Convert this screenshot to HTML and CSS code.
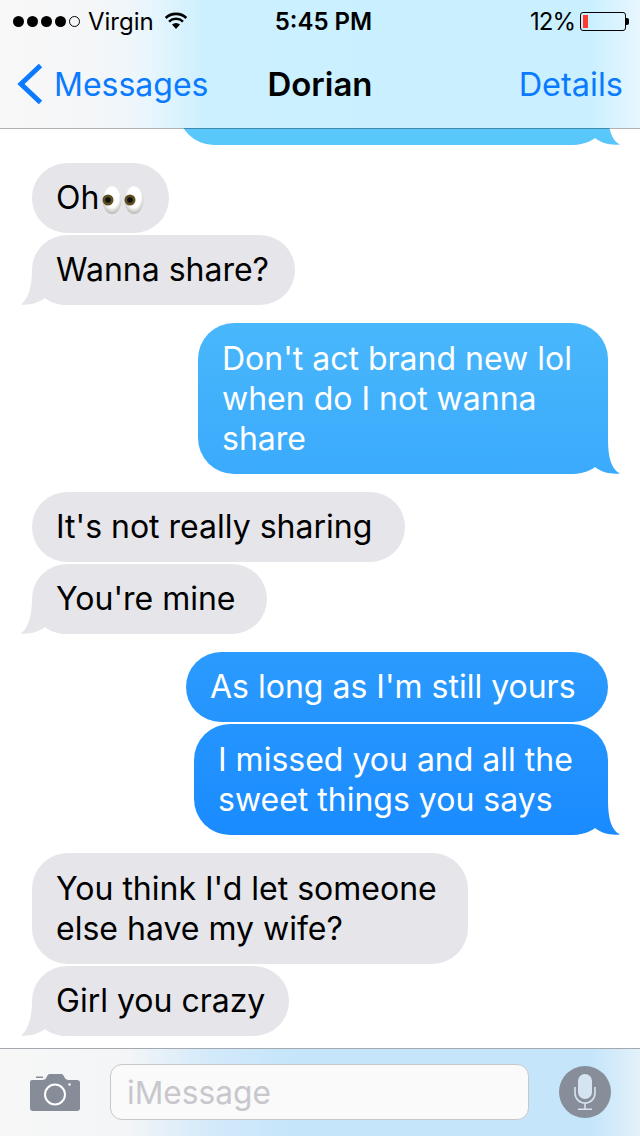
FILE: index.html
```html
<!DOCTYPE html>
<html lang="en">
<head>
<meta charset="utf-8">
<title>Dorian</title>
<link rel="stylesheet" href="styles.css">
</head>
<body>
<div class="phone">
  <header class="top">
    <div class="status">
      <div class="status-left">
        <span class="signal"><i></i><i></i><i></i><i></i><i class="off"></i></span>
        <span class="carrier">Virgin</span>
        <svg class="wifi" width="24" height="18" viewBox="0 0 24 18"><path d="M12 18 8 13.600a6 6 0 0 1 8 0Z"/><path d="M5.800 11.400a9 9 0 0 1 12.400 0l1.600-1.700a11.400 11.400 0 0 0-15.600 0Z"/><path d="M2.600 8a13.600 13.600 0 0 1 18.800 0L23.200 6A16.200 16.200 0 0 0 .8 6Z"/></svg>
      </div>
      <span class="time">5:45 PM</span>
      <div class="status-right">
        <span class="percent">12%</span>
        <span class="battery"><span class="charge"></span></span>
        <span class="nub"></span>
      </div>
    </div>
    <nav class="nav">
      <div class="back">
        <svg class="chevron" width="26" height="42" viewBox="0 0 26 42"><path d="M23.500 2.500 4 21l19.500 18.500" fill="none" stroke="#0a7aff" stroke-width="5"/></svg>
        <span>Messages</span>
      </div>
      <span class="title">Dorian</span>
      <span class="details">Details</span>
    </nav>
  </header>
  <main class="thread">
    <div class="bubble sent tail clipped"></div>

    <div class="group">
      <div class="bubble received w-oh">Oh<svg class="eyes" width="42" height="30" viewBox="0 0 42 30"><defs><radialGradient id="eyeball" cx="50%" cy="40%" r="65%"><stop offset="0.55" stop-color="#fff"/><stop offset="1" stop-color="#a9a9a4"/></radialGradient></defs><ellipse cx="10" cy="15" rx="9.500" ry="14" fill="url(#eyeball)"/><ellipse cx="32" cy="15" rx="9.500" ry="14" fill="url(#eyeball)"/><circle cx="6" cy="15" r="5.500" fill="#5c4f22"/><circle cx="6" cy="15" r="2.800" fill="#111"/><circle cx="28" cy="15" r="5.500" fill="#5c4f22"/><circle cx="28" cy="15" r="2.800" fill="#111"/></svg></div>
      <div class="bubble received tail w-wanna">Wanna share?</div>
    </div>

    <div class="group">
      <div class="bubble sent tail multi w-brand">Don't act brand new lol<br>when do I not wanna<br>share</div>
    </div>

    <div class="group">
      <div class="bubble received w-sharing">It's not really sharing</div>
      <div class="bubble received tail w-mine">You're mine</div>
    </div>

    <div class="group">
      <div class="bubble sent w-long">As long as I'm still yours</div>
      <div class="bubble sent tail multi w-missed">I missed you and all the<br>sweet things you says</div>
    </div>

    <div class="group">
      <div class="bubble received multi w-think">You think I'd let someone<br>else have my wife?</div>
      <div class="bubble received tail w-girl">Girl you crazy</div>
    </div>
  </main>
  <footer class="composer">
    <svg class="camera" width="50" height="37" viewBox="0 0 50 37"><path fill="#868d99" d="M6 2.500h7v1.500H6Z M2 6h11l2.500-1 2-3.500q.5-1.500 2-1.500h12q1.500 0 2 1.500l2 3.500 2.500 1h9q3 0 3 3v25q0 3-3 3H3q-3 0-3-3V8q0-2 2-2Z"/><circle cx="25" cy="20.500" r="10" fill="#868d99" stroke="#fff" stroke-width="2"/><circle cx="39.500" cy="10.500" r="1.200" fill="#fff"/></svg>
    <div class="field">iMessage</div>
    <div class="mic">
      <svg width="24" height="36" viewBox="0 0 24 36"><rect x="5" y="0" width="14" height="25" rx="7" fill="#d5e4f1"/><path d="M2 13v6a10 10 0 0 0 20 0v-6M12 29v6M5 35.200h14" fill="none" stroke="#d5e4f1" stroke-width="1.600"/></svg>
    </div>
  </footer>
</div>
</body>
</html>
```
FILE: styles.css
```css
* { box-sizing: border-box; }
html, body { margin: 0; padding: 0; background: #fff; }
body { font-family: Inter, "Liberation Sans", sans-serif; color: #000; }
.phone { width: 640px; height: 1136px; display: flex; flex-direction: column; overflow: hidden; }

.top {
  position: relative;
  z-index: 2;
  flex: none;
  height: 129px;
  margin-bottom: -1px;
  border-bottom: 1px solid rgba(0, 0, 0, .3);
  background: linear-gradient(90deg, #f8f8f8 0, #f5f6f8 90px, #f0f6fa 125px, #e8f6fd 150px, #d9f2fd 180px, #ccf0ff 205px, #caf0ff 400px, #caf0ff 590px, #e8f6fe 640px) padding-box;
}
.status { height: 40px; display: grid; grid-template-columns: 1fr auto 1fr; align-items: center; padding: 2px 11px 0 13px; font-size: 24px; }
.status-left { display: flex; align-items: center; }
.signal { display: flex; gap: 3px; }
.signal i { width: 11px; height: 11px; border-radius: 50%; background: #000; }
.signal i.off { background: none; border: 1px solid #000; }
.carrier { margin-left: 8px; }
.wifi { margin-left: 10px; margin-top: -2px; }
.time { font-weight: 600; margin-left: 5px; }
.status-right { display: flex; align-items: center; justify-content: flex-end; }
.percent { margin-right: 5px; letter-spacing: -1px; }
.battery { width: 46px; height: 19px; padding: 2px; border: 1px solid #000; border-radius: 3px; }
.charge { display: block; width: 5px; height: 100%; background: #ff3b30; }
.nub { width: 3px; height: 7px; background: #000; border-radius: 0 2px 2px 0; }

.nav { height: 88px; display: grid; grid-template-columns: 1fr auto 1fr; align-items: center; padding: 0 17px; font-size: 32px; color: #0a7aff; }
.back { display: flex; align-items: center; gap: 11px; }
.title { color: #000; font-weight: 600; font-size: 33px; }
.details { justify-self: end; font-size: 32.500px; }

.thread { flex: 1; min-height: 0; overflow: hidden; isolation: isolate; display: flex; flex-direction: column; gap: 18px; padding: 0 32px; background: #fff; }
.group { display: flex; flex-direction: column; gap: 2px; }

.bubble { position: relative; padding: 15px 24px; border-radius: 36px; font-size: 32px; line-height: 40px; white-space: nowrap; }
.multi { padding-top: 16px; }
.received { background: #e5e5ea; color: #000; }
.sent {
  align-self: flex-end;
  margin-left: auto;
  color: #fff;
  background-image: linear-gradient(180deg, #5ac8fa 128px, #1a8bff 836px);
  background-attachment: fixed;
}
.w-oh { width: 137px; }
.w-wanna { width: 263px; }
.w-brand { width: 410px; }
.w-sharing { width: 373px; }
.w-mine { width: 235px; }
.w-long { width: 422px; }
.w-missed { width: 414px; }
.w-think { width: 436px; }
.w-girl { width: 257px; }
.clipped { flex: none; width: 430px; height: 80px; margin-top: -63px; }

.tail::after { content: ""; position: absolute; z-index: -1; bottom: 0; width: 50px; height: 35px; background: inherit; background-attachment: inherit; }
.received.tail::after { left: -11px; clip-path: path("M11 0C11 15 8 28 0 34.500 8 35.500 17 33 24 28 29 32 36 35 46 35H50V0Z"); }
.sent.tail::after { right: -12px; clip-path: path("M38 0C38 18 41 30 50 34.500 40 35.500 31 33 25 28 20 32 12 35 0 35V0Z"); }

.eyes { vertical-align: -6px; margin-left: 3px; }

.composer {
  position: relative;
  flex: none;
  height: 88px;
  display: flex;
  align-items: center;
  gap: 30px;
  padding: 0 29px 1px 30px;
  border-top: 1px solid #a3a9ae;
  background: linear-gradient(90deg, #f7f7f7 0, #f3f5f7 130px, #d3eafa 210px, #c4e5fa 300px, #c4e5fa 590px, #e3f1fa 640px);
}
.camera { flex: none; margin-top: 1px; }
.field { flex: 1; height: 56px; padding: 0 16px; border: 1px solid #c8c8cc; border-radius: 12px; background: #fafafa; color: #c7c7cd; font-size: 31.700px; line-height: 56px; }
.mic { flex: none; width: 52px; height: 52px; border-radius: 50%; background: #878e99; display: flex; align-items: center; justify-content: center; }
```
